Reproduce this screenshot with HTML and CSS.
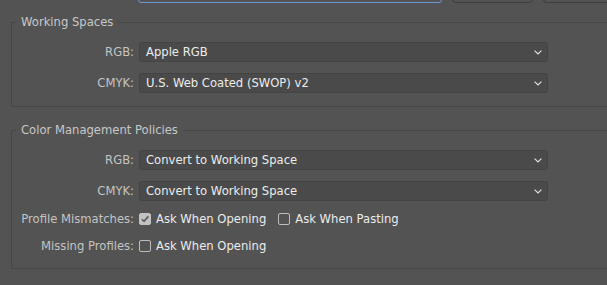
FILE: index.html
```html
<!DOCTYPE html>
<html lang="en">
<head>
    <meta charset="UTF-8">
    <meta name="viewport" content="width=device-width, initial-scale=1.0">
    <title>Color Settings</title>

    <link rel="stylesheet" href="styles.css">
</head>
<body>

    <div class="topbar">
        <div class="field focus"></div>
        <div class="btn"></div>
        <div class="btn cut"></div>
    </div>

    <fieldset class="group">
        <legend>Working Spaces</legend>
        <div class="row">
            <label>RGB:</label>
            <div class="dropdown">
                <span>Apple RGB</span>
                <svg width="8" height="5" viewBox="0 0 8 5"><path d="M0.6 0.6 L4 4 L7.4 0.6" /></svg>
            </div>
        </div>
        <div class="row">
            <label>CMYK:</label>
            <div class="dropdown">
                <span>U.S. Web Coated (SWOP) v2</span>
                <svg width="8" height="5" viewBox="0 0 8 5"><path d="M0.6 0.6 L4 4 L7.4 0.6" /></svg>
            </div>
        </div>
    </fieldset>

    <fieldset class="group policies">
        <legend>Color Management Policies</legend>
        <div class="row">
            <label>RGB:</label>
            <div class="dropdown">
                <span>Convert to Working Space</span>
                <svg width="8" height="5" viewBox="0 0 8 5"><path d="M0.6 0.6 L4 4 L7.4 0.6" /></svg>
            </div>
        </div>
        <div class="row">
            <label>CMYK:</label>
            <div class="dropdown">
                <span>Convert to Working Space</span>
                <svg width="8" height="5" viewBox="0 0 8 5"><path d="M0.6 0.6 L4 4 L7.4 0.6" /></svg>
            </div>
        </div>
        <div class="row checks first">
            <label>Profile Mismatches:</label>
            <div class="options">
                <span class="check on"><i><svg width="10" height="10" viewBox="0 0 10 10"><path d="M1.8 5.2 L4 7.4 L8.4 2.4" /></svg></i>Ask When Opening</span>
                <span class="check"><i></i>Ask When Pasting</span>
            </div>
        </div>
        <div class="row checks">
            <label>Missing Profiles:</label>
            <div class="options">
                <span class="check"><i></i>Ask When Opening</span>
            </div>
        </div>
    </fieldset>

</body>
</html>
```

FILE: styles.css
```css
body{
    margin: 0;
    background-color: #535353;
    font-family: "DejaVu Sans", "Liberation Sans", sans-serif;
    font-size: 11.6px;
    color: #c8c8c8;
    overflow: hidden;
}

/* strip of the dialog above, mostly scrolled away */
.topbar{
    display: flex;
    gap: 10px;
    height: 22px;
    margin-top: -19px;
    padding-left: 138px;
}
.field{
    flex-shrink: 0;
    width: 302px;
    border: 1px solid #6b98d4;
    border-radius: 3px;
}
.btn{
    flex-shrink: 0;
    width: 79px;
    border: 1px solid #3f3f3f;
    border-radius: 4px;
}
.btn.cut{
    flex: 1;
    border-right: none;
    border-radius: 4px 0 0 4px;
}

.group{
    margin: 11px 0 0 11px;
    padding: 12px 0 13px 0;
    border: 1px solid #474747;
    border-right: none;
    border-radius: 2px 0 0 2px;
}
.group legend{
    margin-left: 4px;
    padding: 0 5px 0 5px;
    line-height: 16px;
    color: #c8c8c8;
}
.policies{
    margin-top: 15px;
    padding-bottom: 12px;
}

.row{
    display: flex;
    align-items: center;
    height: 20px;
    margin-bottom: 11px;
}
.row:last-child{
    margin-bottom: 0;
}
.row label{
    width: 122px;
    margin-right: 5px;
    text-align: right;
    color: #c4c4c4;
}

.dropdown{
    display: flex;
    align-items: center;
    justify-content: space-between;
    box-sizing: border-box;
    width: 409px;
    height: 20px;
    padding: 0 5px 0 6px;
    background-color: #4a4a4a;
    border: 1px solid #444444;
    border-radius: 3px;
    color: #ececec;
}
.dropdown svg path{
    fill: none;
    stroke: #e0e0e0;
    stroke-width: 1.2;
}

.checks{
    margin-bottom: 7px;
}
.checks.first{
    margin-top: -3px;
}
.options{
    display: flex;
    gap: 12px;
}
.check{
    display: flex;
    align-items: center;
    color: #ececec;
}
.check i{
    display: inline-flex;
    align-items: center;
    justify-content: center;
    box-sizing: border-box;
    width: 12px;
    height: 12px;
    margin-right: 5px;
    border: 1px solid #bdbdbd;
    border-radius: 2px;
}
.check.on i{
    background-color: #c2c2c2;
    border-color: #c2c2c2;
}
.check svg path{
    fill: none;
    stroke: #5c5c5c;
    stroke-width: 1.6;
}
```
